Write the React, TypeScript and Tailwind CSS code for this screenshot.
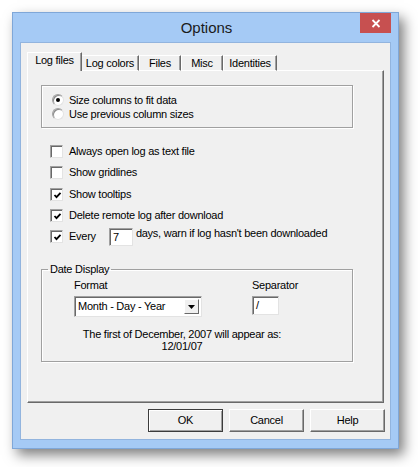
import { type ReactNode } from 'react';

const TABS = [
  { label: 'Log files', w: 'w-[55px]' },
  { label: 'Log colors', w: 'w-[58px]' },
  { label: 'Files', w: 'w-[42px]' },
  { label: 'Misc', w: 'w-[42px]' },
  { label: 'Identities', w: 'w-[54px]' },
];

/** Sunken 13px checkbox, classic look. */
function Check({ checked, children }: { checked?: boolean; children: ReactNode }) {
  return (
    <div className="flex items-center h-[21px] gap-[6px]">
      <span className="w-[13px] h-[13px] bg-white border border-t-[#a0a0a0] border-l-[#a0a0a0] border-b-[#e3e3e3] border-r-[#e3e3e3] shadow-[inset_1px_1px_0_#696969] flex items-center justify-center shrink-0">
        {checked && (
          <svg width="9" height="9" viewBox="0 0 9 9" className="ml-[1px] mt-[1px]">
            <path d="M1.5 4 L3.5 6.2 L7.5 1.8" fill="none" stroke="#000" strokeWidth="1.8" />
          </svg>
        )}
      </span>
      <span>{children}</span>
    </div>
  );
}

function Radio({ checked, children }: { checked?: boolean; children: ReactNode }) {
  return (
    <div className="flex items-center h-[14px] gap-[5px]">
      <span className="w-[12px] h-[12px] rounded-full bg-white border border-t-[#a0a0a0] border-l-[#a0a0a0] border-b-[#e3e3e3] border-r-[#e3e3e3] shadow-[inset_1px_1px_0_#8a8a8a] flex items-center justify-center shrink-0">
        {checked && <span className="w-[4px] h-[4px] rounded-full bg-black" />}
      </span>
      <span>{children}</span>
    </div>
  );
}

function Button({ children, def }: { children: ReactNode; def?: boolean }) {
  return (
    <button
      className={`w-[75px] h-[23px] bg-[#f0f0f0] ${
        def
          ? 'border border-[#3c3c3c] shadow-[inset_1px_1px_0_#fff,inset_-1px_-1px_0_#a0a0a0]'
          : 'border border-t-white border-l-white border-b-[#696969] border-r-[#696969] shadow-[inset_-1px_-1px_0_#a0a0a0]'
      }`}
    >
      {children}
    </button>
  );
}

export default function App() {
  return (
    <div className="w-[418px] h-[467px] bg-white overflow-hidden pt-[12px] pl-[12px] text-[11px] leading-[13px] tracking-[-0.25px] text-black font-['Liberation_Sans',Arial,sans-serif]">
      {/* Dialog window */}
      <div className="w-[387px] h-[437px] bg-[#a5caf5] border border-[#7fa7d8] shadow-[5px_6px_12px_rgba(0,0,0,0.5)] flex flex-col px-[7px] pb-[8px]">
        {/* Title bar */}
        <div className="relative h-[29px] flex items-center justify-center">
          <span className="text-[15px] tracking-normal text-[#1b1b1b] pl-[2px]">Options</span>
          <div className="absolute top-0 right-0 w-[31px] h-[20px] bg-[#c75050] flex items-center justify-center">
            <svg width="10" height="9" viewBox="0 0 10 9">
              <path d="M1.5 1 L8.5 8 M8.5 1 L1.5 8" stroke="#fff" strokeWidth="1.8" />
            </svg>
          </div>
        </div>

        {/* Client area */}
        <div className="flex-1 bg-[#f0f0f0] border border-[#92b4de] pt-[9px] pl-[6px]">
          {/* Tab strip */}
          <div className="flex items-end h-[19px] relative z-10 -mb-px">
            {TABS.map((t, i) => {
              const active = i === 0;
              return (
                <div
                  key={t.label}
                  className={`${t.w} flex items-center justify-center bg-[#f0f0f0] border-t border-l border-t-white border-l-white border-r border-r-[#696969] shadow-[inset_-1px_0_0_#a0a0a0] ${
                    active ? 'h-[19px] pb-[3px] -mr-[1px] z-10' : 'h-[16px] pt-[1px] border-b border-b-white'
                  }`}
                >
                  {t.label}
                </div>
              );
            })}
          </div>

          {/* Tab panel */}
          <div className="w-[357px] h-[333px] border border-t-white border-l-white border-r-[#696969] border-b-[#696969] shadow-[inset_-1px_-1px_0_#a0a0a0] pl-[13px] pt-[14px]">
            {/* Column sizing radios */}
            <div className="w-[312px] h-[43px] border border-[#a0a0a0] shadow-[inset_1px_1px_0_#fff,1px_1px_0_#fff] pt-[7px] pl-[10px]">
              <Radio checked>Size columns to fit data</Radio>
              <Radio>Use previous column sizes</Radio>
            </div>

            {/* Checkboxes */}
            <div className="mt-[13px] pl-[9px]">
              <Check>Always open log as text file</Check>
              <Check>Show gridlines</Check>
              <div className="h-px" />
              <Check checked>Show tooltips</Check>
              <Check checked>Delete remote log after download</Check>
              <div className="flex items-center h-[21px]">
                <Check checked>Every</Check>
                <span className="ml-[13px] w-[24px] h-[18px] bg-white border border-t-[#a0a0a0] border-l-[#a0a0a0] border-b-[#e3e3e3] border-r-[#e3e3e3] shadow-[inset_1px_1px_0_#696969] pl-[3px] pt-[2px]">
                  7
                </span>
                <span className="ml-[3px] -mt-[6px]">days, warn if log hasn't been downloaded</span>
              </div>
            </div>

            {/* Date display group */}
            <fieldset className="mt-[16px] w-[312px] h-[99px] border border-[#a0a0a0] shadow-[inset_1px_1px_0_#fff,1px_1px_0_#fff]">
              <legend className="ml-[6px] px-[2px]">Date Display</legend>
              <div className="flex pl-[32px] pt-[3px]">
                <div className="w-[178px]">
                  <div>Format</div>
                  <div className="mt-[4px] w-[128px] h-[21px] bg-white border border-t-[#a0a0a0] border-l-[#a0a0a0] border-b-[#e3e3e3] border-r-[#e3e3e3] shadow-[inset_1px_1px_0_#696969] flex items-center pl-[3px] pr-[2px]">
                    <span className="flex-1">Month - Day - Year</span>
                    <span className="w-[15px] h-[15px] bg-[#f0f0f0] border border-t-white border-l-white border-b-[#696969] border-r-[#696969] flex items-center justify-center">
                      <svg width="7" height="4" viewBox="0 0 7 4">
                        <path d="M0 0 H7 L3.5 4 Z" fill="#000" />
                      </svg>
                    </span>
                  </div>
                </div>
                <div>
                  <div>Separator</div>
                  <div className="mt-[4px] w-[27px] h-[19px] bg-white border border-t-[#a0a0a0] border-l-[#a0a0a0] border-b-[#e3e3e3] border-r-[#e3e3e3] shadow-[inset_1px_1px_0_#696969] pl-[3px] pt-[2px]">
                    /
                  </div>
                </div>
              </div>
              <div className="ml-[32px] w-[216px] mt-[11px] text-center leading-[12px]">
                <div>The first of December, 2007 will appear as:</div>
                <div>12/01/07</div>
              </div>
            </fieldset>
          </div>

          {/* Dialog buttons */}
          <div className="w-[358px] flex justify-end gap-[6px] mt-[6px]">
            <Button def>OK</Button>
            <Button>Cancel</Button>
            <Button>Help</Button>
          </div>
        </div>
      </div>
    </div>
  );
}
